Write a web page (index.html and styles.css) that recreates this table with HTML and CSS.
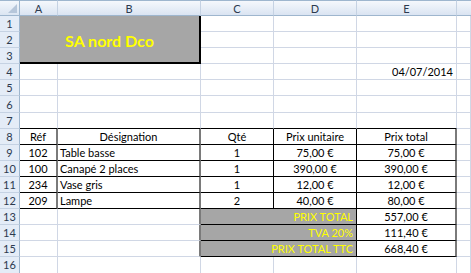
FILE: index.html
```html
<!DOCTYPE html>
<html>
<head>
<meta charset="utf-8">
<link rel="stylesheet" href="styles.css">
</head>
<body>
<div class="sheet">
  <div class="corner"><span class="tri"></span></div>
  <div class="ch">A</div><div class="ch">B</div><div class="ch">C</div><div class="ch">D</div><div class="ch">E</div><div class="ch last"></div>

  <div class="rh">1</div><div class="c title">SA nord Dco</div><div class="c"></div><div class="c"></div><div class="c"></div><div class="c"></div>
  <div class="rh">2</div><div class="c"></div><div class="c"></div><div class="c"></div><div class="c"></div>
  <div class="rh">3</div><div class="c"></div><div class="c"></div><div class="c"></div><div class="c"></div>

  <div class="rh">4</div><div class="c"></div><div class="c"></div><div class="c"></div><div class="c"></div><div class="c r">04/07/2014</div><div class="c"></div>
  <div class="rh">5</div><div class="c"></div><div class="c"></div><div class="c"></div><div class="c"></div><div class="c"></div><div class="c"></div>
  <div class="rh">6</div><div class="c"></div><div class="c"></div><div class="c"></div><div class="c"></div><div class="c"></div><div class="c"></div>
  <div class="rh">7</div><div class="c bb"></div><div class="c bb"></div><div class="c bb"></div><div class="c bb"></div><div class="c bb"></div><div class="c"></div>

  <div class="rh">8</div><div class="c t ctr vg">Réf</div><div class="c t ctr vg">Désignation</div><div class="c t ctr">Qté</div><div class="c t ctr">Prix unitaire</div><div class="c t ctr vg">Prix total</div><div class="c"></div>
  <div class="rh">9</div><div class="c t ctr vg">102</div><div class="c t vg">Table basse</div><div class="c t ctr">1</div><div class="c t ctr">75,00 €</div><div class="c t ctr vg">75,00 €</div><div class="c"></div>
  <div class="rh">10</div><div class="c t ctr vg">100</div><div class="c t vg">Canapé 2 places</div><div class="c t ctr">1</div><div class="c t ctr">390,00 €</div><div class="c t ctr vg">390,00 €</div><div class="c"></div>
  <div class="rh">11</div><div class="c t ctr vg">234</div><div class="c t vg">Vase gris</div><div class="c t ctr">1</div><div class="c t ctr">12,00 €</div><div class="c t ctr vg">12,00 €</div><div class="c"></div>
  <div class="rh">12</div><div class="c t ctr vg">209</div><div class="c t vg">Lampe</div><div class="c t ctr">2</div><div class="c t ctr">40,00 €</div><div class="c t ctr vg">80,00 €</div><div class="c"></div>

  <div class="rh">13</div><div class="c"></div><div class="c vg"></div><div class="c t lab">PRIX TOTAL</div><div class="c t ctr vg">557,00 €</div><div class="c"></div>
  <div class="rh">14</div><div class="c"></div><div class="c vg"></div><div class="c t lab">TVA 20%</div><div class="c t ctr vg">111,40 €</div><div class="c"></div>
  <div class="rh">15</div><div class="c"></div><div class="c vg"></div><div class="c t lab">PRIX TOTAL TTC</div><div class="c t ctr vg">668,40 €</div><div class="c"></div>
  <div class="rh">16</div><div class="c"></div><div class="c"></div><div class="c"></div><div class="c"></div><div class="c"></div><div class="c"></div>
</div>
</body>
</html>
```

FILE: styles.css
```css
html, body {
  margin: 0;
  padding: 0;
  background: #ffffff;
  overflow: hidden;
}
.sheet {
  display: grid;
  grid-template-columns: 20px 38px 143px 73px 83px 100px 1fr;
  grid-template-rows: 16px;
  grid-auto-rows: 16.1px;
  width: 471px;
  height: 273px;
  font-family: Lato, "Liberation Sans", sans-serif;
  font-size: 11px;
  color: #000;
}
.sheet > div {
  box-sizing: border-box;
  min-width: 0;
  overflow: hidden;
  white-space: nowrap;
}
.corner {
  position: relative;
  background: linear-gradient(#f3f7fc, #dbe5f2);
  border-top: 1px solid #9eb6ce;
  border-right: 1px solid #9eb6ce;
  border-bottom: 1px solid #9eb6ce;
}
.tri {
  position: absolute;
  right: 2px;
  bottom: 2px;
  width: 0;
  height: 0;
  border-left: 9px solid transparent;
  border-bottom: 9px solid #b6c6da;
}
.ch {
  background: linear-gradient(#f5f8fc, #dae4f2);
  border-top: 1px solid #9eb6ce;
  border-right: 1px solid #c5d2e3;
  border-bottom: 1px solid #9eb6ce;
  display: flex;
  align-items: center;
  justify-content: center;
  color: #2c3a4f;
  font-size: 11px;
}
.ch.last { border-right: none; }
.rh {
  background: #e4ecf7;
  border-right: 1px solid #9eb6ce;
  border-bottom: 1px solid #c5d2e3;
  display: flex;
  align-items: center;
  justify-content: center;
  color: #2c3a4f;
  font-size: 11px;
}
.c {
  border-right: 1px solid #d0d7e5;
  border-bottom: 1px solid #d0d7e5;
  display: flex;
  align-items: flex-end;
  padding: 0 2px 1px 2px;
  line-height: 13px;
}
.title {
  grid-column: span 2;
  grid-row: span 3;
  background: #a6a6a6;
  border-right: 2px solid #000;
  border-bottom: 2px solid #000;
  align-items: center;
  justify-content: center;
  color: #ffff00;
  font-weight: bold;
  font-size: 16px;
  padding: 2px 0 0 0;
}
.r { justify-content: flex-end; padding-right: 3px; }
.bb { border-bottom: 1px solid #000; }
.t { border-right: 1px solid #000; border-bottom: 1px solid #000; }
.ctr { justify-content: center; }
.vg { border-right: 2px solid #7a7a7a; }
.lab {
  grid-column: span 2;
  background: #a6a6a6;
  color: #ffff00;
  justify-content: flex-end;
  padding-right: 3px;
}
```
